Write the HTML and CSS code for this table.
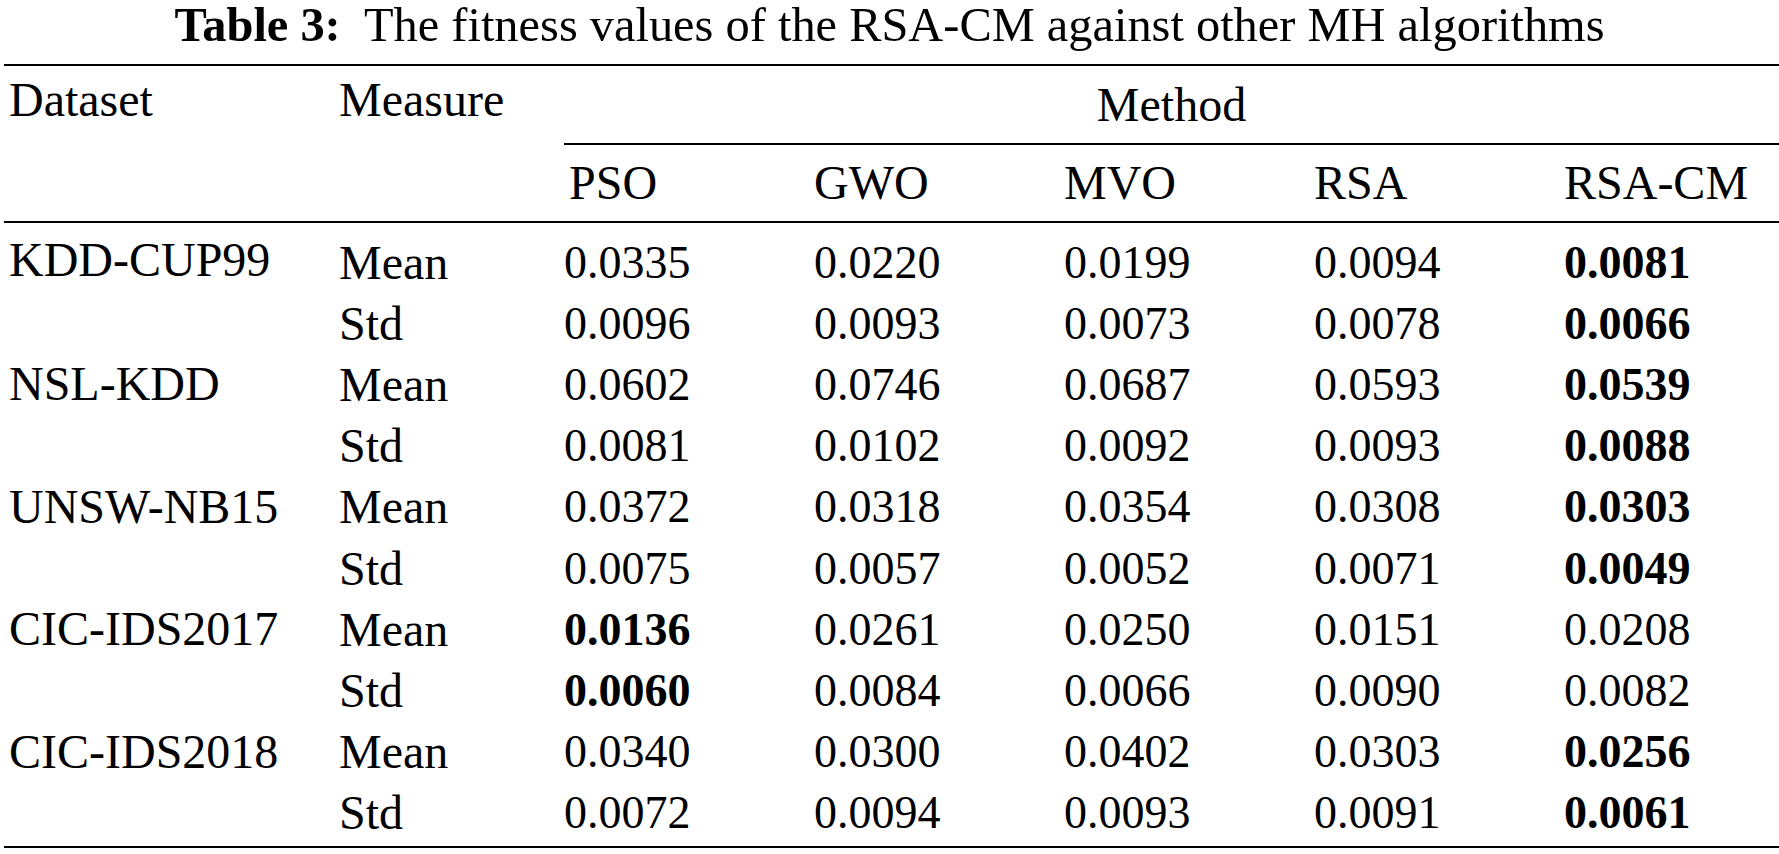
FILE: index.html
```html
<!DOCTYPE html>
<html>
<head>
<meta charset="utf-8">
<link rel="stylesheet" href="styles.css">
</head>
<body>
<div class="page">
  <p class="caption"><b>Table 3:</b>&nbsp; The fitness values of the RSA-CM against other MH algorithms</p>
  <table class="tbl">
    <colgroup>
      <col class="c-ds"><col class="c-ms"><col class="c-m"><col class="c-m"><col class="c-m"><col class="c-m"><col class="c-last">
    </colgroup>
    <thead>
      <tr class="h1">
        <th class="top" rowspan="2">Dataset</th>
        <th class="top" rowspan="2">Measure</th>
        <th class="method" colspan="5">Method</th>
      </tr>
      <tr class="h2">
        <th class="mh">PSO</th><th class="mh">GWO</th><th class="mh">MVO</th><th class="mh">RSA</th><th class="mh">RSA-CM</th>
      </tr>
    </thead>
    <tbody>
      <tr class="first"><td rowspan="2" class="ds">KDD-CUP99</td><td class="m">Mean</td><td>0.0335</td><td>0.0220</td><td>0.0199</td><td>0.0094</td><td><b>0.0081</b></td></tr>
      <tr><td class="m">Std</td><td>0.0096</td><td>0.0093</td><td>0.0073</td><td>0.0078</td><td><b>0.0066</b></td></tr>
      <tr><td rowspan="2" class="ds">NSL-KDD</td><td class="m">Mean</td><td>0.0602</td><td>0.0746</td><td>0.0687</td><td>0.0593</td><td><b>0.0539</b></td></tr>
      <tr><td class="m">Std</td><td>0.0081</td><td>0.0102</td><td>0.0092</td><td>0.0093</td><td><b>0.0088</b></td></tr>
      <tr><td rowspan="2" class="ds">UNSW-NB15</td><td class="m">Mean</td><td>0.0372</td><td>0.0318</td><td>0.0354</td><td>0.0308</td><td><b>0.0303</b></td></tr>
      <tr><td class="m">Std</td><td>0.0075</td><td>0.0057</td><td>0.0052</td><td>0.0071</td><td><b>0.0049</b></td></tr>
      <tr><td rowspan="2" class="ds">CIC-IDS2017</td><td class="m">Mean</td><td><b>0.0136</b></td><td>0.0261</td><td>0.0250</td><td>0.0151</td><td>0.0208</td></tr>
      <tr><td class="m">Std</td><td><b>0.0060</b></td><td>0.0084</td><td>0.0066</td><td>0.0090</td><td>0.0082</td></tr>
      <tr><td rowspan="2" class="ds">CIC-IDS2018</td><td class="m">Mean</td><td>0.0340</td><td>0.0300</td><td>0.0402</td><td>0.0303</td><td><b>0.0256</b></td></tr>
      <tr class="last"><td class="m">Std</td><td>0.0072</td><td>0.0094</td><td>0.0093</td><td>0.0091</td><td><b>0.0061</b></td></tr>
    </tbody>
  </table>
</div>
</body>
</html>
```
FILE: styles.css
```css
html, body {
  margin: 0;
  padding: 0;
  background: #ffffff;
}
.page {
  width: 1779px;
  font-family: "Liberation Serif", "Times New Roman", serif;
  color: #000;
}
.caption {
  margin: 0;
  height: 64px;
  font-size: 48.4px;
  line-height: 50px;
  text-align: center;
}
.caption b {
  font-weight: bold;
}
.tbl {
  margin-left: 4px;
  width: 1775px;
  border-collapse: collapse;
  table-layout: fixed;
  font-size: 48px;
  line-height: 46px;
}
.c-ds { width: 335px; }
.c-ms { width: 225px; }
.c-m { width: 250px; }
.c-last { width: 215px; }
.tbl th, .tbl td {
  padding: 0;
  text-align: left;
  font-weight: normal;
  white-space: nowrap;
}
.tbl th:first-child, .tbl td.ds {
  padding-left: 5px;
}
.h1 th {
  border-top: 2px solid #000;
  height: 77px;
}
.h1 th.top {
  vertical-align: top;
  padding-top: 11px;
  border-bottom: 2px solid #000;
}
.h1 th.method {
  text-align: center;
  vertical-align: middle;
}
.h2 th.mh {
  border-top: 2px solid #000;
  border-bottom: 2px solid #000;
  height: 76px;
  vertical-align: middle;
}
.tbl tbody {
  border-bottom: 2.5px solid #000;
}
.tbl tbody td {
  height: 61.2px;
  vertical-align: middle;
  font-size: 46px;
}
.tbl tbody td.ds,
.tbl tbody td.m {
  font-size: 48px;
}
.tbl tbody td.ds {
  vertical-align: top;
  padding-top: 7px;
}
.tbl tbody tr.first td {
  padding-top: 9px;
}
.tbl tbody tr.first td.ds {
  padding-top: 14px;
}
.tbl tbody tr.last td {
  padding-bottom: 2px;
}
.tbl b {
  font-weight: bold;
}
```
